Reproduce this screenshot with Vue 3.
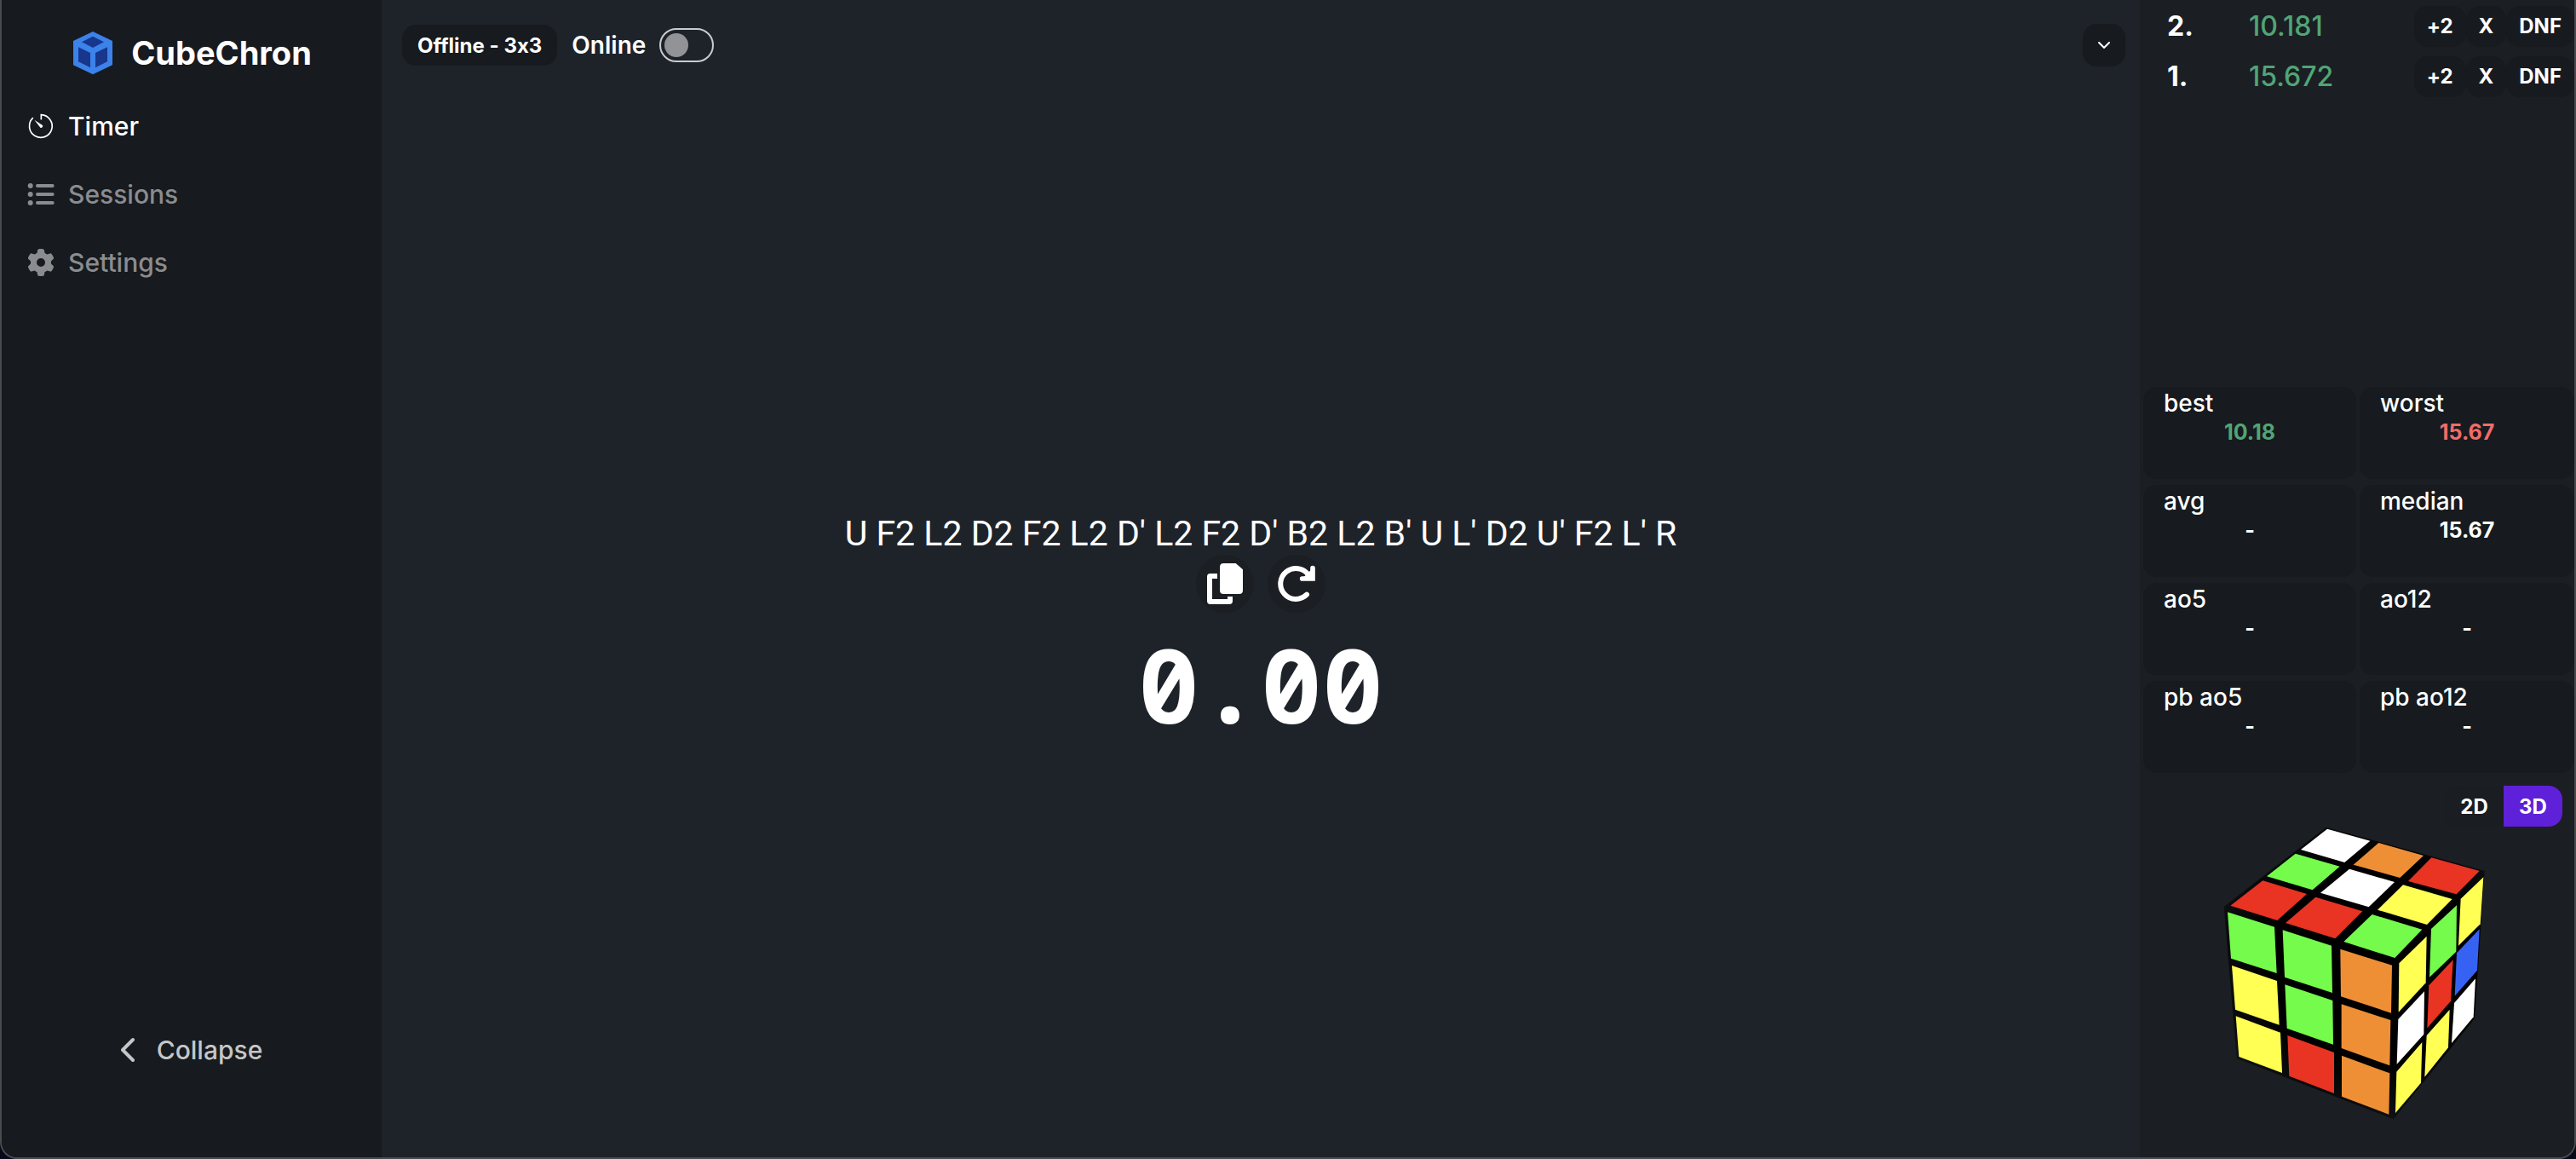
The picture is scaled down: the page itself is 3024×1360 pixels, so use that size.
<script setup>
import { ref } from 'vue'

const scramble = "U F2 L2 D2 F2 L2 D' L2 F2 D' B2 L2 B' U L' D2 U' F2 L' R"
const online = ref(false)
const view = ref('3D')

const solves = [
  { n: 2, time: '10.181' },
  { n: 1, time: '15.672' },
]

const stats = [
  { label: 'best', value: '10.18', tone: 'good' },
  { label: 'worst', value: '15.67', tone: 'bad' },
  { label: 'avg', value: '-' },
  { label: 'median', value: '15.67' },
  { label: 'ao5', value: '-' },
  { label: 'ao12', value: '-' },
  { label: 'pb ao5', value: '-' },
  { label: 'pb ao12', value: '-' },
]

const colors = { W: '#ffffff', O: '#ee8f36', R: '#e93323', G: '#75fb4c', Y: '#ffff54', B: '#3662f4' }

const stickers = [
  // top face
  ['W', '456,218 607,260 517,336 363,291'],
  ['O', '637,267 795,312 712,390 548,344'],
  ['R', '823,319 992,366 911,448 741,402'],
  ['G', '344,305 500,350 404,433 243,385'],
  ['W', '534,359 693,405 602,493 432,443'],
  ['Y', '723,415 896,465 807,555 633,503'],
  ['R', '229,400 384,447 280,540 115,488'],
  ['R', '415,458 580,508 484,604 309,549'],
  ['G', '614,519 790,572 694,672 514,615'],
  // front face
  ['G', '105,511 270,563 278,726 117,674'],
  ['G', '299,574 471,629 474,795 306,740'],
  ['O', '502,641 684,698 681,866 504,808'],
  ['Y', '120,699 279,753 287,908 132,854'],
  ['G', '307,766 475,822 477,977 314,920'],
  ['O', '506,835 679,891 676,1051 506,990'],
  ['Y', '134,877 291,935 297,1077 145,1020'],
  ['R', '316,945 480,1005 480,1149 322,1088'],
  ['O', '507,1016 676,1078 673,1223 507,1160'],
  // right face
  ['Y', '709,691 806,596 803,760 707,863'],
  ['G', '822,570 912,487 910,650 816,740'],
  ['Y', '926,464 1006,388 995,553 918,629'],
  ['W', '706,888 798,790 796,941 701,1046'],
  ['R', '814,769 899,679 891,824 808,919'],
  ['B', '912,655 992,571 984,716 905,806'],
  ['Y', '700,1073 790,969 786,1112 696,1218'],
  ['Y', '806,945 887,854 882,988 799,1091'],
  ['W', '903,831 978,745 971,880 894,972'],
]
</script>

<template>
  <div class="app">
    <aside class="sidebar">
      <div class="brand">
        <svg class="logo" viewBox="252 108 150 156" aria-hidden="true">
          <path d="M327 111 L396 144 V229 L327 262 L258 229 V144 Z" fill="#3b82ea" />
          <path d="M327 128 L366 148 L327 168 L288 148 Z M276 166 L318 186 V238 L276 217 Z M378 166 L336 186 V238 L378 217 Z" fill="#17368c" />
        </svg>
        <span class="brand-name">CubeChron</span>
      </div>
      <nav class="nav">
        <a class="nav-link active" href="#timer">
          <svg viewBox="96 396 96 96" aria-hidden="true" fill="none" stroke="currentColor" stroke-width="5" stroke-linecap="round">
            <path d="M145 419 V404 A40 40 0 1 1 115 416" />
            <path d="M121 422 L142 449 A6 6 0 0 0 150 441 Z" fill="currentColor" stroke="none" />
          </svg>
          <span>Timer</span>
        </a>
        <a class="nav-link" href="#sessions">
          <svg viewBox="97 636 96 96" aria-hidden="true" fill="currentColor">
            <circle cx="108" cy="654" r="9" /><circle cx="108" cy="684" r="9" /><circle cx="108" cy="714" r="9" />
            <rect x="127" y="648" width="65" height="12" rx="6" /><rect x="127" y="678" width="65" height="12" rx="6" /><rect x="127" y="708" width="65" height="12" rx="6" />
          </svg>
          <span>Sessions</span>
        </a>
        <a class="nav-link" href="#settings">
          <svg viewBox="0 0 512 512" aria-hidden="true" fill="currentColor">
            <path d="M495.900 166.600c3.200 8.700 .5 18.400-6.400 24.600l-43.300 39.400c1.100 8.300 1.700 16.800 1.700 25.400s-.6 17.100-1.700 25.400l43.300 39.400c6.900 6.200 9.600 15.900 6.400 24.600c-4.400 11.900-9.700 23.300-15.800 34.300l-4.700 8.100c-6.600 11-14 21.400-22.100 31.200c-5.900 7.200-15.700 9.600-24.500 6.800l-55.700-17.700c-13.400 10.300-28.200 18.900-44 25.400l-12.500 57.100c-2 9.100-9 16.300-18.200 17.800c-13.800 2.300-28 3.500-42.500 3.500s-28.700-1.200-42.500-3.500c-9.200-1.500-16.200-8.700-18.200-17.800l-12.500-57.100c-15.800-6.500-30.600-15.100-44-25.400L83.100 425.900c-8.800 2.800-18.600 .3-24.500-6.800c-8.100-9.800-15.500-20.200-22.100-31.200l-4.700-8.100c-6.100-11-11.400-22.400-15.800-34.300c-3.200-8.700-.5-18.400 6.400-24.600l43.300-39.400C64.600 273.100 64 264.600 64 256s.6-17.100 1.700-25.400L22.400 191.200c-6.900-6.200-9.600-15.900-6.400-24.600c4.400-11.900 9.700-23.300 15.800-34.300l4.700-8.100c6.600-11 14-21.400 22.100-31.200c5.900-7.200 15.700-9.600 24.500-6.800l55.700 17.700c13.400-10.300 28.200-18.900 44-25.400l12.500-57.100c2-9.100 9-16.300 18.200-17.800C227.300 1.200 241.500 0 256 0s28.700 1.200 42.500 3.500c9.200 1.500 16.200 8.700 18.200 17.800l12.500 57.100c15.800 6.500 30.600 15.100 44 25.400l55.700-17.700c8.800-2.800 18.600-.3 24.500 6.800c8.100 9.800 15.500 20.200 22.100 31.200l4.700 8.100c6.100 11 11.400 22.400 15.800 34.300zM256 336a80 80 0 1 0 0-160 80 80 0 1 0 0 160z" />
          </svg>
          <span>Settings</span>
        </a>
      </nav>
      <button class="collapse" type="button">
        <svg viewBox="0 0 16 30" aria-hidden="true" fill="none" stroke="currentColor" stroke-width="4" stroke-linecap="round" stroke-linejoin="round">
          <path d="M14 3 L2 15 L14 27" />
        </svg>
        <span>Collapse</span>
      </button>
    </aside>

    <main class="main">
      <header class="topbar">
        <button class="session" type="button">Offline - 3x3</button>
        <label class="online">
          <span>Online</span>
          <input v-model="online" class="switch" type="checkbox" role="switch" />
        </label>
        <button class="expand" type="button" aria-label="Show options">
          <svg viewBox="0 0 16 10" aria-hidden="true" fill="none" stroke="currentColor" stroke-width="2" stroke-linecap="round" stroke-linejoin="round">
            <path d="M2 2 L8 8 L14 2" />
          </svg>
        </button>
      </header>

      <section class="stage">
        <p class="scramble">{{ scramble }}</p>
        <div class="actions">
          <button class="round" type="button" aria-label="Copy scramble">
            <svg viewBox="108 63 132 150" aria-hidden="true">
              <path d="M147 111 H122 Q120 111 120 113 V199 Q120 201 122 201 H190 Q192 201 192 199 V183" fill="none" stroke="currentColor" stroke-width="18" />
              <path d="M169 66 H212 L237 88 V161 Q237 174 224 174 H169 Q156 174 156 161 V79 Q156 66 169 66 Z" fill="currentColor" />
            </svg>
          </button>
          <button class="round" type="button" aria-label="New scramble">
            <svg viewBox="360 63 138 150" aria-hidden="true" fill="none" stroke="currentColor" stroke-linecap="round" stroke-linejoin="round">
              <path d="M465 176 A54 54 0 1 1 471 107" stroke-width="18" />
              <path d="M486 83 V120 H449 Z" fill="currentColor" stroke="none" />
              <path d="M486 83 V120 H449" stroke-width="17" stroke-linejoin="miter" />
            </svg>
          </button>
        </div>
        <p class="clock">0.00</p>
      </section>
    </main>

    <aside class="panel">
      <ol class="solves">
        <li v-for="s in solves" :key="s.n" class="solve">
          <span class="solve-n">{{ s.n }}.</span>
          <span class="solve-time">{{ s.time }}</span>
          <button class="mini" type="button">+2</button>
          <button class="mini" type="button">X</button>
          <button class="mini" type="button">DNF</button>
        </li>
      </ol>

      <dl class="stats">
        <div v-for="s in stats" :key="s.label" class="stat">
          <dt>{{ s.label }}</dt>
          <dd :class="s.tone">{{ s.value }}</dd>
        </div>
      </dl>

      <div class="views">
        <button v-for="v in ['2D', '3D']" :key="v" type="button" class="view" :class="{ on: view === v }" :aria-pressed="view === v" @click="view = v">{{ v }}</button>
      </div>

      <svg class="cube" viewBox="90 210 921 1035" role="img" aria-label="Scrambled cube">
        <defs>
          <radialGradient id="body" gradientUnits="userSpaceOnUse" cx="600" cy="680" r="600">
            <stop offset="0" stop-color="#000" />
            <stop offset="0.6" stop-color="#000" />
            <stop offset="1" stop-color="#121416" />
          </radialGradient>
        </defs>
        <polygon points="452,212 1010,366 975,885 690,1240 137,1026 92,492" fill="url(#body)" />
        <polygon v-for="([c, points], i) in stickers" :key="i" :points="points" :fill="colors[c]" />
      </svg>
    </aside>
  </div>
</template>

<style>
body {
  margin: 0;
  background: #08081a;
}
</style>

<style scoped>
.app {
  display: flex;
  box-sizing: border-box;
  min-height: 100vh;
  overflow: hidden;
  border: solid #4b4b4f;
  border-width: 0 2px 2px;
  border-radius: 0 0 20px 20px;
  background: #1e232a;
  color: #fff;
  font-family: Inter, 'Liberation Sans', sans-serif;
  font-feature-settings: 'calt' 0;
}

button {
  margin: 0;
  border: 0;
  padding: 0;
  background: none;
  color: inherit;
  font: inherit;
  font-feature-settings: inherit;
  cursor: pointer;
}

svg {
  display: block;
  flex: none;
}

.sidebar {
  flex: none;
  display: flex;
  flex-direction: column;
  width: 446px;
  background: #171a1e;
}

.brand {
  display: flex;
  align-items: center;
  justify-content: center;
  gap: 20px;
  height: 48px;
  padding: 38px 0 22px;
}

.logo {
  width: 50px;
  height: 52px;
}

.brand-name {
  font-size: 38px;
  font-weight: 700;
}

.nav-link {
  display: flex;
  align-items: center;
  gap: 16px;
  height: 80px;
  padding-left: 30px;
  color: #8b8c8f;
  font-size: 30px;
  font-weight: 500;
  text-decoration: none;
}

.nav-link.active {
  color: #fff;
}

.nav-link svg {
  width: 32px;
  height: 32px;
}

.collapse {
  display: flex;
  align-items: center;
  justify-content: center;
  gap: 26px;
  height: 80px;
  margin: auto 0 86px;
  color: #c5c6c7;
  font-size: 30px;
  font-weight: 500;
}

.collapse svg {
  width: 16px;
  height: 30px;
}

.main {
  flex: 1;
  display: flex;
  flex-direction: column;
  min-width: 0;
}

.topbar {
  display: flex;
  align-items: center;
  gap: 17px;
  padding: 28px 17px 0 24px;
}

.session {
  height: 48px;
  padding: 0 18px;
  border-radius: 16px;
  background: #171a1e;
  font-size: 24px;
  font-weight: 700;
}

.online {
  display: flex;
  align-items: center;
  gap: 16px;
  font-size: 28px;
  font-weight: 600;
}

.switch {
  appearance: none;
  display: flex;
  align-items: center;
  box-sizing: border-box;
  width: 64px;
  height: 40px;
  margin: 0;
  padding: 0 4px;
  border: 2px solid #c8cccf;
  border-radius: 20px;
}

.switch::before {
  content: '';
  width: 28px;
  height: 28px;
  border-radius: 50%;
  background: #929396;
}

.switch:checked {
  justify-content: flex-end;
}

.expand {
  display: grid;
  place-items: center;
  width: 50px;
  height: 50px;
  margin-left: auto;
  border-radius: 16px;
  background: #171a1e;
}

.expand svg {
  width: 16px;
  height: 10px;
}

.stage {
  flex: 1;
  display: flex;
  flex-direction: column;
  align-items: center;
  justify-content: center;
  padding-top: 32px;
}

.scramble {
  margin: 0;
  font-family: Roboto, sans-serif;
  font-size: 41px;
  line-height: 50px;
}

.actions {
  display: flex;
  gap: 16px;
}

.round {
  display: grid;
  place-items: center;
  width: 68px;
  height: 68px;
  border-radius: 50%;
  background: #1b1e22;
}

.round svg {
  height: 50px;
}

.clock {
  margin: 20px 0 0;
  font-family: 'Noto Sans Mono', 'DejaVu Sans Mono', monospace;
  font-size: 120px;
  font-weight: 700;
  font-feature-settings: 'zero';
  line-height: 128px;
}

.panel {
  flex: none;
  display: flex;
  flex-direction: column;
  width: 510px;
  background: #1b1e22;
}

.solves {
  flex: 1;
  margin: 0;
  padding: 1px 0 0;
  list-style: none;
}

.solve {
  display: flex;
  align-items: center;
  height: 59px;
  padding-left: 32px;
  font-size: 32px;
}

.solve-n {
  width: 96px;
  font-weight: 700;
}

.solve-time {
  flex: 1;
  color: #50a576;
  font-weight: 500;
}

.mini {
  height: 48px;
  padding: 0 15px;
  border-radius: 16px;
  background: #171a1e;
  font-size: 24px;
  font-weight: 700;
}

.stats {
  display: grid;
  grid-template-columns: 250px 1fr;
  grid-auto-rows: 108px;
  gap: 7px 4px;
  margin: 0;
  padding-left: 4px;
}

.stat {
  padding-top: 3px;
  border-radius: 16px;
  background: #171a1e;
}

.stat dt {
  padding-left: 24px;
  font-size: 28px;
  font-weight: 500;
  line-height: 32px;
}

.stat dd {
  margin: 0;
  font-size: 25px;
  font-weight: 700;
  line-height: 36px;
  text-align: center;
}

.good {
  color: #50a576;
}

.bad {
  color: #f16c69;
}

.views {
  display: flex;
  justify-content: flex-end;
  margin: 15px 14px 0 0;
}

.view {
  width: 69px;
  height: 48px;
  background: #1a1d21;
  font-size: 24px;
  font-weight: 700;
}

.view:first-child {
  border-radius: 16px 0 0 16px;
}

.view:last-child {
  border-radius: 0 16px 16px 0;
}

.view.on {
  background: #5f20d9;
}

.cube {
  width: 307px;
  height: 345px;
  margin: 0 0 43px 98px;
}
</style>
